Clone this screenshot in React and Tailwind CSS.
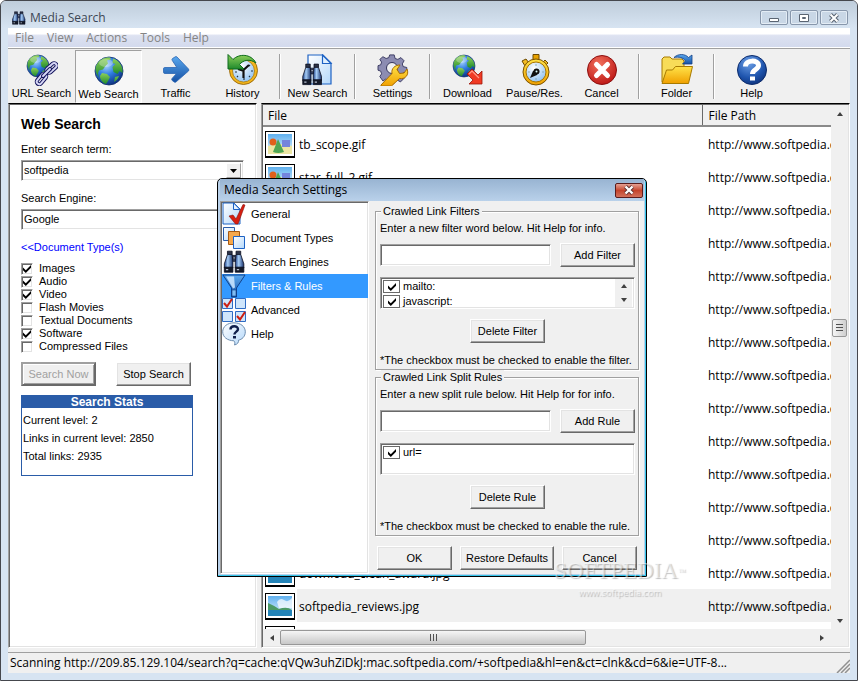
import { useState } from "react";

/* ==================== DATA ==================== */

const MENUS = ["File", "View", "Actions", "Tools", "Help"];

const DOC_TYPES = [
    { label: "Images", checked: true },
    { label: "Audio", checked: true },
    { label: "Video", checked: true },
    { label: "Flash Movies", checked: false },
    { label: "Textual Documents", checked: false },
    { label: "Software", checked: true },
    { label: "Compressed Files", checked: false },
];

const FILES = [
    { name: "tb_scope.gif", kind: "gif" },
    { name: "star_full_2.gif", kind: "gif" },
    { name: "", kind: "gif" },
    { name: "", kind: "gif" },
    { name: "", kind: "gif" },
    { name: "", kind: "gif" },
    { name: "", kind: "gif" },
    { name: "", kind: "gif" },
    { name: "", kind: "jpg" },
    { name: "", kind: "jpg" },
    { name: "", kind: "jpg" },
    { name: "", kind: "jpg" },
    { name: "", kind: "jpg" },
    { name: "download_clean_award.jpg", kind: "jpg" },
    { name: "softpedia_reviews.jpg", kind: "jpg", selected: true },
    { name: "", kind: "jpg" },
];

/* Classic bevels */
const RAISED =
    "border border-t-white border-l-white border-r-[#696969] border-b-[#696969] shadow-[inset_-1px_-1px_0_#a0a0a0,inset_1px_1px_0_#e3e3e3]";
const SUNKEN =
    "border border-t-[#a0a0a0] border-l-[#a0a0a0] border-r-white border-b-white shadow-[inset_1px_1px_0_#696969,inset_-1px_-1px_0_#e3e3e3]";

const SANS = "font-['Liberation_Sans',Arial,sans-serif]";
const UI = "font-['Open_Sans','Noto_Sans',sans-serif]";

/* ==================== ICONS ==================== */

function Defs() {
    return (
        <defs>
            <radialGradient id="sea" cx="0.4" cy="0.3" r="0.75">
                <stop offset="0" stopColor="#a9d4ff" />
                <stop offset="0.45" stopColor="#2f7de0" />
                <stop offset="1" stopColor="#0a2a78" />
            </radialGradient>
            <linearGradient id="land" x1="0" y1="0" x2="0" y2="1">
                <stop offset="0" stopColor="#8fd05a" />
                <stop offset="1" stopColor="#1f8a2c" />
            </linearGradient>
            <linearGradient id="arrowBlue" x1="0" y1="0" x2="0" y2="1">
                <stop offset="0" stopColor="#5aa8ee" />
                <stop offset="1" stopColor="#1450a4" />
            </linearGradient>
            <linearGradient id="gold" x1="0" y1="0" x2="0" y2="1">
                <stop offset="0" stopColor="#ffe34a" />
                <stop offset="1" stopColor="#f0a000" />
            </linearGradient>
            <linearGradient id="tube" x1="0" y1="0" x2="1" y2="0">
                <stop offset="0" stopColor="#1d3f86" />
                <stop offset="0.4" stopColor="#a6cdf6" />
                <stop offset="1" stopColor="#16306c" />
            </linearGradient>
            <radialGradient id="red" cx="0.4" cy="0.3" r="0.8">
                <stop offset="0" stopColor="#f2705c" />
                <stop offset="1" stopColor="#b80f0f" />
            </radialGradient>
            <radialGradient id="navy" cx="0.4" cy="0.25" r="0.85">
                <stop offset="0" stopColor="#6ea0e6" />
                <stop offset="0.6" stopColor="#1f55ae" />
                <stop offset="1" stopColor="#0b2c72" />
            </radialGradient>
            <radialGradient id="dial" cx="0.4" cy="0.3" r="0.8">
                <stop offset="0" stopColor="#ffffff" />
                <stop offset="1" stopColor="#86bdf2" />
            </radialGradient>
            <linearGradient id="paper" x1="0" y1="0" x2="1" y2="1">
                <stop offset="0" stopColor="#ffffff" />
                <stop offset="1" stopColor="#b4d8fa" />
            </linearGradient>
            <linearGradient id="sky" x1="0" y1="0" x2="0" y2="1">
                <stop offset="0" stopColor="#5fb0ee" />
                <stop offset="1" stopColor="#e8f6ff" />
            </linearGradient>
        </defs>
    );
}

function Binoculars() {
    return (
        <g stroke="#0b0f20" strokeWidth="1">
            <path d="M7 5h6v4H7zM18 5h6v4h-6z" fill="#2c3348" />
            <path d="M12 10h7v7h-7z" fill="#3f4c6c" />
            <path d="M7 9h6l1 9v7H3v-5z" fill="url(#tube)" />
            <path d="M18 9h6l4 11v5H17v-7z" fill="url(#tube)" />
            <path d="M3 24h11v6H3zM17 24h11v6H17z" fill="#151a28" />
            <path d="M5 27h3M19 27h3" stroke="#b8c0d0" strokeWidth="1.5" />
            <circle cx="15.5" cy="13" r="1.5" fill="#c8d4ea" />
        </g>
    );
}

function Globe({ cx = 16, cy = 16, r = 14 }) {
    return (
        <g transform={`translate(${cx} ${cy}) scale(${r / 14})`}>
            <circle r="14" fill="url(#sea)" stroke="#12306a" strokeWidth="0.8" />
            <path d="M-13-5C-10-12-4-14 1-13.500l1 2-4 1 1 3-3 3-2 3-4 1-1 3 1 4C-13.500 2-14-2-13-5Z" fill="url(#land)" />
            <path d="M4-12.500c5 1.500 8.500 5.500 9.500 10.500v4l-3-2-2 3-4-2-1-5 3-3-3-1Z" fill="url(#land)" />
            <path d="M-7 2l5 1 3 3-2 4-2 3c-4-1-6-5-6-8ZM6 6l4-1c-1 3-3 5-5 6Z" fill="url(#land)" />
            <ellipse cx="-3" cy="-8" rx="7" ry="4" fill="#fff" opacity="0.28" />
        </g>
    );
}

function ToolIcon({ name }) {
    return (
        <svg viewBox="0 0 32 32" className="size-8" aria-hidden="true">
            {name === "url" && (
                <>
                    <Globe cx={12} cy={12} r={11} />
                    <g fill="none" strokeLinecap="round">
                        <g stroke="#14145c" strokeWidth="4">
                            <rect x="-6" y="-2.500" width="12" height="5" rx="2.500" transform="translate(15.500 25) rotate(-50)" />
                            <rect x="-6" y="-2.500" width="12" height="5" rx="2.500" transform="translate(25.500 14) rotate(-42)" />
                        </g>
                        <g stroke="#d4d4f4" strokeWidth="2">
                            <rect x="-6" y="-2.500" width="12" height="5" rx="2.500" transform="translate(15.500 25) rotate(-50)" />
                            <rect x="-6" y="-2.500" width="12" height="5" rx="2.500" transform="translate(25.500 14) rotate(-42)" />
                        </g>
                        <path d="M17 22l7-7" stroke="#14145c" strokeWidth="4" />
                        <path d="M17 22l7-7" stroke="#d8d8f6" strokeWidth="2" />
                    </g>
                </>
            )}
            {name === "web" && <Globe />}
            {name === "traffic" && (
                <path
                    d="M4.500 13.500Q3.500 13.500 3.500 15v3q0 1.500 1.500 1.500h11.500l-4.500 5q-.8 1 .2 2l2 1.500q1 .8 2-.2L28.500 17q.7-1 0-2L17 3q-1-1-2 0l-2.500 1.500q-1 1-.2 2l4.500 7Z"
                    fill="url(#arrowBlue)"
                    stroke="#2a66b4"
                    strokeWidth="0.8"
                />
            )}
            {name === "history" && (
                <>
                    <circle cx="16.500" cy="16.500" r="14" fill="#f2b51c" stroke="#8a5a00" strokeWidth="0.8" />
                    <circle cx="16.500" cy="17" r="11" fill="url(#dial)" stroke="#b07800" strokeWidth="0.8" />
                    <path d="M26 17h-2M17 26v-2M8 18h2M23 11l-1 1M23 23l-1-1M10 23l1-1" stroke="#234" strokeWidth="1.200" />
                    <path d="M16.500 24v-8L22 11M11 15l6 2" fill="none" stroke="#111" strokeWidth="2.200" />
                    <path
                        d="M1 .5l5 5C12-.5 24-.5 29 9 23 4.500 16 6 12.500 10.500L17 15H1Z"
                        fill="url(#land)"
                        stroke="#0c6a1c"
                    />
                </>
            )}
            {name === "new" && (
                <>
                    <path d="M6 1h15l8 8v21H6Z" fill="url(#paper)" stroke="#1d62c4" strokeWidth="1.200" />
                    <path d="M20.500 1v8.500H29Z" fill="#dff0ff" stroke="#1d62c4" strokeWidth="1.200" />
                    <g transform="translate(-1.500 6) scale(.75 .82)">
                        <Binoculars />
                    </g>
                </>
            )}
            {name === "settings" && (
                <>
                    <path
                        d="M13 1h5l1 4 3 1 3.500-2 3.500 3.500-2 3.500 1 3 4 1v5l-4 1-1 3 2 3-4 4-3.500-2-3 1-1 3h-5l-1-4-3-1-3 2L2 25l2-3-1-3-3-1v-5l3-1 1-3-2-3L5.500 3 9 5l3-1Z"
                        fill="#8c8cb2"
                        stroke="#34345c"
                        transform="translate(1 0) scale(.9)"
                    />
                    <circle cx="15" cy="14" r="5.500" fill="#f0f0f0" stroke="#34345c" />
                    <path
                        d="M3 31l11-11.500c-1-5 3-8.500 8-8.500l-3 4.500 2.500 4 4.500-.5 3-4c2.500 6-2 10.500-7.500 9.500L13.500 32H3Z"
                        fill="url(#gold)"
                        stroke="#a86c00"
                        transform="translate(1 0)"
                    />
                </>
            )}
            {name === "download" && (
                <>
                    <Globe cx={12} cy={12} r={11} />
                    <path d="M15 20l5-5 6 6 4-4v13H17l4-4Z" fill="#f03a24" stroke="#9c1408" strokeWidth="0.8" />
                    <path d="M17 20l3-3 7 7" fill="none" stroke="#ff9a86" strokeWidth="1.200" />
                </>
            )}
            {name === "pause" && (
                <>
                    <path d="M14 .5h6v5h-6z" fill="#e8a200" stroke="#6e4a00" />
                    <path d="M3 7l4-2 3 4-4 3ZM26 6l3 3-2 2-3-3Z" fill="#f4bc24" stroke="#6e4a00" />
                    <circle cx="17" cy="18" r="13" fill="url(#gold)" stroke="#7a5200" />
                    <circle cx="17" cy="18" r="10" fill="url(#dial)" stroke="#a87400" />
                    <path d="M17 10v2M25 18h-2M17 26v-2M9 18h2" stroke="#8ab" strokeWidth="1" />
                    <path d="M11 24l3-7 6-1-2 5Z" fill="#111" />
                    <circle cx="17.500" cy="17.500" r="3" fill="#111" />
                    <circle cx="17.500" cy="17.500" r="1" fill="#dff" />
                </>
            )}
            {name === "cancel" && (
                <>
                    <circle cx="16" cy="16" r="14.500" fill="url(#red)" stroke="#8c1010" />
                    <path d="M10.500 10.500l11 11M21.500 10.500l-11 11" stroke="#fff" strokeWidth="5" strokeLinecap="round" />
                </>
            )}
            {name === "folder" && (
                <>
                    <path d="M1 28V5l2-2h6l2 2h10l2 2v21Z" fill="#f8dc58" stroke="#a87a00" />
                    <path d="M1 29.500L5.500 16h6l3-3.500H31.500L27.500 29.500Z" fill="url(#gold)" stroke="#a87a00" />
                    <path
                        d="M13 3.500C17-.5 24-.5 27.500 3.500L31 1v9H21.500l3-3C22 3.500 18 2.500 13 3.500Z"
                        fill="url(#arrowBlue)"
                        stroke="#123f86"
                        strokeWidth="0.8"
                    />
                </>
            )}
            {name === "help" && (
                <>
                    <circle cx="16" cy="16" r="14.500" fill="url(#navy)" stroke="#0d2c6c" />
                    <path
                        d="M9.500 12.500C9.500 5.500 22.500 5.500 22.500 11.500c0 4-6 4-6 8.500"
                        fill="none"
                        stroke="#fff"
                        strokeWidth="5"
                    />
                    <path d="M14 22.500h5v4h-5z" fill="#fff" />
                </>
            )}
        </svg>
    );
}

function SideIcon({ name }) {
    return (
        <svg viewBox="0 0 24 24" className="size-6 shrink-0" aria-hidden="true">
            {name === "general" && (
                <>
                    <path d="M1 1h11l6 6v15H1Z" fill="url(#paper)" stroke="#1d62c4" />
                    <path d="M11.500 1v6.500H18Z" fill="#e6f3ff" stroke="#1d62c4" />
                    <path d="M7 14l4-1 3 4L21 2.500l2 .5-7 19h-2.500Z" fill="#d81e10" stroke="#86100a" strokeWidth="0.6" />
                </>
            )}
            {name === "types" && (
                <>
                    <path d="M1.500 1.500h11v13h-11Z" fill="url(#paper)" stroke="#2a5ca8" />
                    <path d="M6.500 5.500h11v13h-11Z" fill="#f6a84c" stroke="#a85a10" />
                    <path d="M11.500 10.500h11v12h-11Z" fill="url(#paper)" stroke="#1d62c4" />
                </>
            )}
            {name === "engines" && (
                <g transform="translate(0 -3) scale(.78 .84)">
                    <Binoculars />
                </g>
            )}
            {name === "filters" && (
                <>
                    <path d="M1 1h22l-8.500 13v9h-5v-9Z" fill="url(#arrowBlue)" stroke="#0f418c" />
                    <path d="M4 2.500h8l1 11-2 1Z" fill="#cfe8ff" opacity="0.85" />
                    <path d="M10 16h4v6h-4z" fill="#7fbcf2" stroke="#0f418c" strokeWidth="0.6" />
                </>
            )}
            {name === "advanced" && (
                <>
                    <path
                        d="M.5.5h10v10H.5ZM13.500.5h10v10h-10ZM.5 13.500h10v10H.5ZM13.500 13.500h10v10h-10Z"
                        fill="#cfe6fb"
                        stroke="#2f6cc4"
                    />
                    <path d="M2 5l3 3.500L10 1M15 18l3 3.500L23 14" fill="none" stroke="#cc2014" strokeWidth="2" />
                </>
            )}
            {name === "help" && (
                <>
                    <path
                        d="M12 .8C18.500.8 23.300 4.500 23.300 9.800c0 5-3.600 7.700-6.800 8.400.3 2-.8 4-4 4.800.6-1.500.5-3-.6-4.200C5.300 18.600.7 15 .7 9.800.7 4.500 5.500.8 12 .8Z"
                        fill="url(#paper)"
                        stroke="#6c8cae"
                    />
                    <path d="M8.500 7.500C8.500 3.200 16 3.200 16 7.300c0 2.200-3.600 2.500-3.600 5.200" fill="none" stroke="#10204c" strokeWidth="2.400" />
                    <path d="M11 14h3v2.500h-3z" fill="#10204c" />
                </>
            )}
        </svg>
    );
}

function Thumb({ kind }) {
    return (
        <svg viewBox="0 0 30 27" className="mt-[2px] h-[27px] w-[30px]" aria-hidden="true">
            <path d="M0 0h30v27H0Z" fill="#000" />
            <path d="M1 1h28v24H1Z" fill="#fff" />
            <path d="M3 3h24v20H3Z" fill="url(#sky)" />
            {kind === "gif" ? (
                <>
                    <path d="M3 15q12-4 24 0v8H3Z" fill="#ece6a4" />
                    <path d="M17 9h8v7h-8z" fill="#7484dc" />
                    <circle cx="8" cy="11" r="3.500" fill="#e0601c" />
                    <path d="M13 8l6 13q-6 2-11 0Z" fill="#4fa654" />
                </>
            ) : (
                <>
                    <path d="M12 9q3-5 7-2t8-2v10H14Z" fill="#fff" opacity="0.7" />
                    <path d="M3 10q7 3 11 6 8-3 13 1v2H3Z" fill="#4c9a66" />
                    <path d="M3 17h24v6H3Z" fill="#2484b8" />
                </>
            )}
        </svg>
    );
}

function Arrow({ dir }) {
    const paths = {
        up: "M1 6l3-4 3 4Z",
        down: "M1 2l3 4 3-4Z",
        left: "M6 1L2 4l4 3Z",
        right: "M2 1l4 3-4 3Z",
    };
    return (
        <svg viewBox="0 0 8 8" className="size-2" aria-hidden="true">
            <path d={paths[dir]} fill="#404040" />
        </svg>
    );
}

/* ==================== CONTROLS ==================== */

function Button({ className = "", children, ...props }) {
    return (
        <button
            type="button"
            className={`h-6 bg-[#f0f0f0] text-center whitespace-nowrap disabled:text-[#a0a0a0] ${RAISED} ${className}`}
            {...props}
        >
            {children}
        </button>
    );
}

function Tick() {
    return (
        <svg viewBox="0 0 8 8" className="pointer-events-none col-start-1 row-start-1 size-2" aria-hidden="true">
            <path d="M0 2.500l2.800 2.700L8 0v2.800L2.800 8 0 5.300Z" fill="#000" />
        </svg>
    );
}

function DocCheck({ label, checked }) {
    const [on, setOn] = useState(checked);
    return (
        <label className="flex h-[13px] items-center gap-[6px]">
            <span className="grid place-items-center">
                <input
                    type="checkbox"
                    checked={on}
                    onChange={() => setOn(!on)}
                    className={`col-start-1 row-start-1 size-3 appearance-none bg-white ${SUNKEN}`}
                />
                {on && <Tick />}
            </span>
            {label}
        </label>
    );
}

function RuleCheck({ label }) {
    const [on, setOn] = useState(true);
    return (
        <label className="flex h-[15px] items-center gap-[3px]">
            <span className="grid place-items-center">
                <input
                    type="checkbox"
                    checked={on}
                    onChange={() => setOn(!on)}
                    className="col-start-1 row-start-1 h-[13px] w-[17px] appearance-none border border-[#696969] bg-white"
                />
                {on && <Tick />}
            </span>
            {label}
        </label>
    );
}

function ToolButton({ icon, label, active }) {
    return (
        <button
            type="button"
            className={`flex h-[53px] w-[67px] shrink-0 flex-col items-center gap-[1px] border whitespace-nowrap ${
                active
                    ? "border-t-[#a0a0a0] border-r-white border-b-white border-l-[#a0a0a0] bg-[#f7f7f7] pt-1"
                    : "border-transparent pt-[3px]"
            }`}
        >
            <ToolIcon name={icon} />
            <span className="leading-3">{label}</span>
        </button>
    );
}

function ToolSeparator() {
    return (
        <div className="flex w-2 shrink-0 justify-center py-1">
            <div className="w-[2px] border-r border-l border-r-white border-l-[#a0a0a0]" />
        </div>
    );
}

function CaptionButton({ label, children }) {
    return (
        <button
            type="button"
            aria-label={label}
            className="flex h-[15px] w-7 items-center justify-center rounded-[2px] border border-[#8796ab] bg-[#c9d7e6] shadow-[inset_0_0_0_1px_#e3ecf5]"
        >
            <svg viewBox="0 0 12 10" className="h-[10px] w-3" aria-hidden="true">
                {children}
            </svg>
        </button>
    );
}

/* ==================== MAIN WINDOW ==================== */

function SearchPanel() {
    return (
        <section className={`w-[249px] shrink-0 bg-white px-3 pt-[10px] text-[11px] ${SANS} ${SUNKEN} border-t-black`}>
            <h1 className="text-[14px] leading-5 font-bold">Web Search</h1>

            <label htmlFor="term" className="mt-[7px] block leading-4">
                Enter search term:
            </label>
            <div className={`mt-[3px] flex h-[21px] w-[223px] bg-white p-[2px] ${SUNKEN}`}>
                <input id="term" defaultValue="softpedia" className="min-w-0 grow outline-none" />
                <button
                    type="button"
                    aria-label="Show search terms"
                    className="flex w-[15px] items-center justify-center border border-t-white border-r-[#a0a0a0] border-b-[#a0a0a0] border-l-white bg-[#f0f0f0]"
                >
                    <svg viewBox="0 0 7 4" className="h-1 w-[7px]" aria-hidden="true">
                        <path d="M0 0h7L3.500 4Z" />
                    </svg>
                </button>
            </div>

            <label htmlFor="engine" className="mt-[9px] block leading-4">
                Search Engine:
            </label>
            <select
                id="engine"
                defaultValue="Google"
                className={`mt-[3px] block h-[21px] w-[223px] appearance-none bg-white pl-[2px] ${SUNKEN}`}
            >
                <option>Google</option>
            </select>

            <a href="#types" className="mt-[9px] block leading-4 text-[#0000ff]">
                &lt;&lt;Document Type(s)
            </a>

            <div id="types" className="mt-[7px]">
                {DOC_TYPES.map((t) => (
                    <DocCheck key={t.label} {...t} />
                ))}
            </div>

            <div className="mt-[9px] flex gap-5">
                <button
                    type="button"
                    disabled
                    className="h-6 w-[75px] border-2 border-t-[#a0a0a0] border-r-[#696969] border-b-[#696969] border-l-[#a0a0a0] bg-[#f0f0f0] text-[#a0a0a0] shadow-[inset_1px_1px_0_#fff,inset_-1px_-1px_0_#a0a0a0]"
                >
                    Search Now
                </button>
                <Button className="w-[75px]">Stop Search</Button>
            </div>

            <div className="mt-[9px] h-[81px] w-[172px] border border-[#2a5ca8]">
                <h2 className="bg-[#2a5ca8] text-center text-[12px] leading-3 font-bold text-white">Search Stats</h2>
                <div className="px-px pt-[3px] leading-[18px]">
                    <p>Current level: 2</p>
                    <p>Links in current level: 2850</p>
                    <p>Total links: 2935</p>
                </div>
            </div>
        </section>
    );
}

function ResultsPanel() {
    return (
        <section className={`flex min-w-0 grow flex-col bg-white p-px text-[12px] ${UI} ${SUNKEN} border-t-black`}>
            <div className="flex min-h-0 grow">
                <div className="min-w-0 grow overflow-hidden">
                    <table className="w-full table-fixed border-collapse">
                        <colgroup>
                            <col className="w-[439px]" />
                            <col />
                        </colgroup>
                        <thead>
                            <tr className="h-[21px] bg-[#f0f0f0] text-left">
                                <th className="border-r border-b-2 border-r-[#696969] border-b-[#8a8a8a] px-[5px] pt-[2px] pb-0 leading-4 font-normal">
                                    File
                                </th>
                                <th className="border-b-2 border-b-[#8a8a8a] px-[6px] pt-[2px] pb-0 leading-4 font-normal">File Path</th>
                            </tr>
                        </thead>
                        <tbody>
                            {FILES.map((f, i) => (
                                <tr key={i} className="h-[33px]">
                                    <td className="p-0">
                                        <div className="flex h-[33px] items-center gap-[2px] pl-[2px]">
                                            <Thumb kind={f.kind} />
                                            <span
                                                className={`flex h-full grow items-center pt-[2px] pl-[2px] ${f.selected ? "bg-[#f0f0f0]" : ""}`}
                                            >
                                                {f.name}
                                            </span>
                                        </div>
                                    </td>
                                    <td
                                        className={`overflow-hidden pt-[2px] pr-0 pb-0 pl-[6px] whitespace-nowrap ${f.selected ? "bg-[#f0f0f0]" : ""}`}
                                    >
                                        http://www.softpedia.com
                                    </td>
                                </tr>
                            ))}
                        </tbody>
                    </table>
                </div>

                {/* Vertical scroll bar */}
                <div className="flex w-[17px] shrink-0 flex-col items-center bg-[#f0f0f0]">
                    <button type="button" aria-label="Scroll up" className="flex h-[17px] items-center">
                        <Arrow dir="up" />
                    </button>
                    <div className="grow-[5]" />
                    <div className="flex h-[18px] w-[15px] flex-col items-center justify-center gap-[2px] rounded-[2px] border border-[#979797] bg-linear-to-r from-[#f5f5f5] to-[#cfcfcf]">
                        <i className="h-px w-[7px] bg-[#505050]" />
                        <i className="h-px w-[7px] bg-[#505050]" />
                        <i className="h-px w-[7px] bg-[#505050]" />
                    </div>
                    <div className="grow-[7]" />
                    <button type="button" aria-label="Scroll down" className="flex h-[17px] items-center">
                        <Arrow dir="down" />
                    </button>
                </div>
            </div>

            {/* Horizontal scroll bar */}
            <div className="flex h-[17px] shrink-0 items-center bg-[#f0f0f0] pr-[18px]">
                <button type="button" aria-label="Scroll left" className="flex w-[17px] justify-center">
                    <Arrow dir="left" />
                </button>
                <div className="grow">
                    <div className="flex h-[15px] w-[57.5%] items-center justify-center gap-[2px] rounded-[2px] border border-[#979797] bg-linear-to-b from-[#f5f5f5] to-[#c8c8c8]">
                        <i className="h-[7px] w-px bg-[#505050]" />
                        <i className="h-[7px] w-px bg-[#505050]" />
                        <i className="h-[7px] w-px bg-[#505050]" />
                    </div>
                </div>
                <button type="button" aria-label="Scroll right" className="flex w-[17px] justify-center">
                    <Arrow dir="right" />
                </button>
            </div>
        </section>
    );
}

/* ==================== SETTINGS DIALOG ==================== */

function RuleGroup({ legend, hint, add, remove, note, items, scroll }) {
    return (
        <fieldset className="min-w-0 border border-[#a0a0a0] pr-[3px] pb-px pl-1 shadow-[1px_1px_0_#fff,inset_1px_1px_0_#fff]">
            <legend className="ml-px bg-[#f0f0f0] px-[2px] leading-[14px]">{legend}</legend>
            <p className="leading-5">{hint}</p>
            <div className="mt-[5px] flex items-center gap-[9px]">
                <input aria-label={hint} className={`h-[22px] min-w-0 grow bg-white px-1 outline-none ${SUNKEN}`} />
                <Button className="w-[75px]">{add}</Button>
            </div>
            <div className={`mt-[10px] flex h-8 bg-white px-[2px] py-px ${SUNKEN}`}>
                <div className="grow">
                    {items.map((item) => (
                        <RuleCheck key={item} label={item} />
                    ))}
                </div>
                {scroll && (
                    <div className="flex w-[17px] flex-col items-center justify-around bg-[#f0f0f0]">
                        <Arrow dir="up" />
                        <Arrow dir="down" />
                    </div>
                )}
            </div>
            <Button className="mx-auto mt-[10px] block w-[75px]">{remove}</Button>
            <p className="mt-[9px] leading-4 whitespace-nowrap">{note}</p>
        </fieldset>
    );
}

const PAGES = [
    { icon: "general", label: "General" },
    { icon: "types", label: "Document Types" },
    { icon: "engines", label: "Search Engines" },
    { icon: "filters", label: "Filters & Rules" },
    { icon: "advanced", label: "Advanced" },
    { icon: "help", label: "Help" },
];

function SettingsDialog() {
    const [page, setPage] = useState("Filters & Rules");
    return (
        <div
            role="dialog"
            aria-label="Media Search Settings"
            className="absolute top-[177px] left-[216px] w-[430px] rounded-t-[5px] border border-black bg-[#b9d1ea] px-[2px] pb-[2px] text-[11px] shadow-[inset_-1px_-1px_0_#35c4e8]"
        >
            <header className="flex h-[22px] items-center justify-between bg-linear-to-b from-[#98b4d2] to-[#b9d1ea] pr-[1px] pl-1">
                <span className={`text-[12px] ${UI}`}>Media Search Settings</span>
                <button
                    type="button"
                    aria-label="Close"
                    className="flex h-[15px] w-7 items-center justify-center rounded-[2px] border border-[#5a1c1c] bg-linear-to-b from-[#e4a093] via-[#c4432b] to-[#d2705a]"
                >
                    <svg viewBox="0 0 12 10" className="h-[10px] w-3" aria-hidden="true">
                        <path d="M2.500 1.500l7 7M9.500 1.500l-7 7" stroke="#5c3030" strokeWidth="4" />
                        <path d="M2.500 1.500l7 7M9.500 1.500l-7 7" stroke="#fff" strokeWidth="2.400" />
                    </svg>
                </button>
            </header>

            <div className="flex bg-[#f0f0f0]">
                <nav className={`w-[149px] shrink-0 bg-white pl-px ${SUNKEN}`}>
                    {PAGES.map((p) => (
                        <button
                            key={p.label}
                            type="button"
                            onClick={() => setPage(p.label)}
                            className={`flex h-6 w-full items-center gap-[5px] text-left ${p.label === page ? "bg-[#3399ff] text-white" : ""}`}
                        >
                            <SideIcon name={p.icon} />
                            {p.label}
                        </button>
                    ))}
                </nav>

                <div className="min-w-0 grow pt-[3px] pr-[5px] pb-1 pl-[6px]">
                    <RuleGroup
                        legend="Crawled Link Filters"
                        hint="Enter a new filter word below. Hit Help for info."
                        add="Add Filter"
                        remove="Delete Filter"
                        note="*The checkbox must be checked to enable the filter."
                        items={["mailto:", "javascript:"]}
                        scroll
                    />
                    <RuleGroup
                        legend="Crawled Link Split Rules"
                        hint="Enter a new split rule below. Hit Help for for info."
                        add="Add Rule"
                        remove="Delete Rule"
                        note="*The checkbox must be checked to enable the rule."
                        items={["url="]}
                    />
                    <div className="mt-[10px] flex justify-between px-[2px]">
                        <Button className="w-[75px]">OK</Button>
                        <Button className="w-[94px]">Restore Defaults</Button>
                        <Button className="w-[75px]">Cancel</Button>
                    </div>
                </div>
            </div>
        </div>
    );
}

/* ==================== APP ==================== */

export default function App() {
    return (
        <div className={`relative flex h-screen flex-col overflow-hidden rounded-t-[6px] border border-[#45474d] bg-[#d7e4f2] px-[7px] pb-[7px] text-[11px] text-black ${SANS}`}>
            <header className="-mx-[7px] flex h-[27px] shrink-0 items-center bg-linear-to-b from-[#bfcddb] to-[#d7e4f2] pt-[6px] pr-[9px] pl-[10px]">
                <svg viewBox="0 4 32 27" className="h-[14px] w-4" aria-hidden="true">
                    <Defs />
                    <Binoculars />
                </svg>
                <span className={`ml-[3px] grow text-[12px] text-[#3c4654] ${UI}`}>Media Search</span>
                <div className="flex gap-[2px]">
                    <CaptionButton label="Minimize">
                        <path d="M1.500 5.500h9v3h-9Z" fill="#fff" stroke="#5a6472" />
                    </CaptionButton>
                    <CaptionButton label="Maximize">
                        <path d="M1.500 1.500h9v7h-9ZM4.500 4.500h3v1h-3Z" fill="#fff" stroke="#5a6472" />
                    </CaptionButton>
                    <CaptionButton label="Close">
                        <path d="M2.500 1.500l7 7M9.500 1.500l-7 7" stroke="#5a6472" strokeWidth="4" />
                        <path d="M2.500 1.500l7 7M9.500 1.500l-7 7" stroke="#fff" strokeWidth="2" />
                    </CaptionButton>
                </div>
            </header>

            <nav className={`flex h-5 shrink-0 items-center gap-[13px] border-b border-white bg-linear-to-b from-white from-30% via-[#dde2f1] via-40% to-[#d3daed] pl-[7px] text-[12px] text-[#858585] ${UI}`}>
                {MENUS.map((m) => (
                    <button key={m} type="button">
                        {m}
                    </button>
                ))}
            </nav>

            <div className="flex h-[55px] shrink-0 overflow-hidden border-t border-[#a0a0a0] bg-[#f0f0f0] pt-px">
                <ToolButton icon="url" label="URL Search" />
                <ToolButton icon="web" label="Web Search" active />
                <ToolButton icon="traffic" label="Traffic" />
                <ToolButton icon="history" label="History" />
                <ToolSeparator />
                <ToolButton icon="new" label="New Search" />
                <ToolSeparator />
                <ToolButton icon="settings" label="Settings" />
                <ToolSeparator />
                <ToolButton icon="download" label="Download" />
                <ToolButton icon="pause" label="Pause/Res." />
                <ToolButton icon="cancel" label="Cancel" />
                <ToolSeparator />
                <ToolButton icon="folder" label="Folder" />
                <ToolSeparator />
                <ToolButton icon="help" label="Help" />
            </div>

            <main className="flex min-h-0 grow gap-1 bg-[#f0f0f0] pb-1">
                <SearchPanel />
                <ResultsPanel />
            </main>

            <footer className={`flex h-[21px] shrink-0 items-center justify-between border-t border-[#a0a0a0] bg-[#f0f0f0] pl-[2px] text-[12px] ${UI}`}>
                <span className="whitespace-nowrap">
                    Scanning http://209.85.129.104/search?q=cache:qVQw3uhZiDkJ:mac.softpedia.com/+softpedia&amp;hl=en&amp;ct=clnk&amp;cd=6&amp;ie=UTF-8...
                </span>
                <svg viewBox="0 0 14 14" className="size-[14px] self-end" aria-hidden="true">
                    <path d="M1 14L14 1M5 14l9-9M9 14l5-5" stroke="#909090" strokeWidth="1.500" />
                </svg>
            </footer>

            <SettingsDialog />

            {/* Watermark */}
            <div className="pointer-events-none absolute top-[556px] left-[553px] text-center text-white/50 [text-shadow:1px_1px_1px_rgba(0,0,0,0.25)]">
                <p className="font-['Liberation_Serif',serif] text-[23px] leading-7">
                    SOFTPEDIA<sup className="text-[8px]">™</sup>
                </p>
                <p className={`text-[9px] leading-4 ${UI}`}>www.softpedia.com</p>
            </div>
        </div>
    );
}
